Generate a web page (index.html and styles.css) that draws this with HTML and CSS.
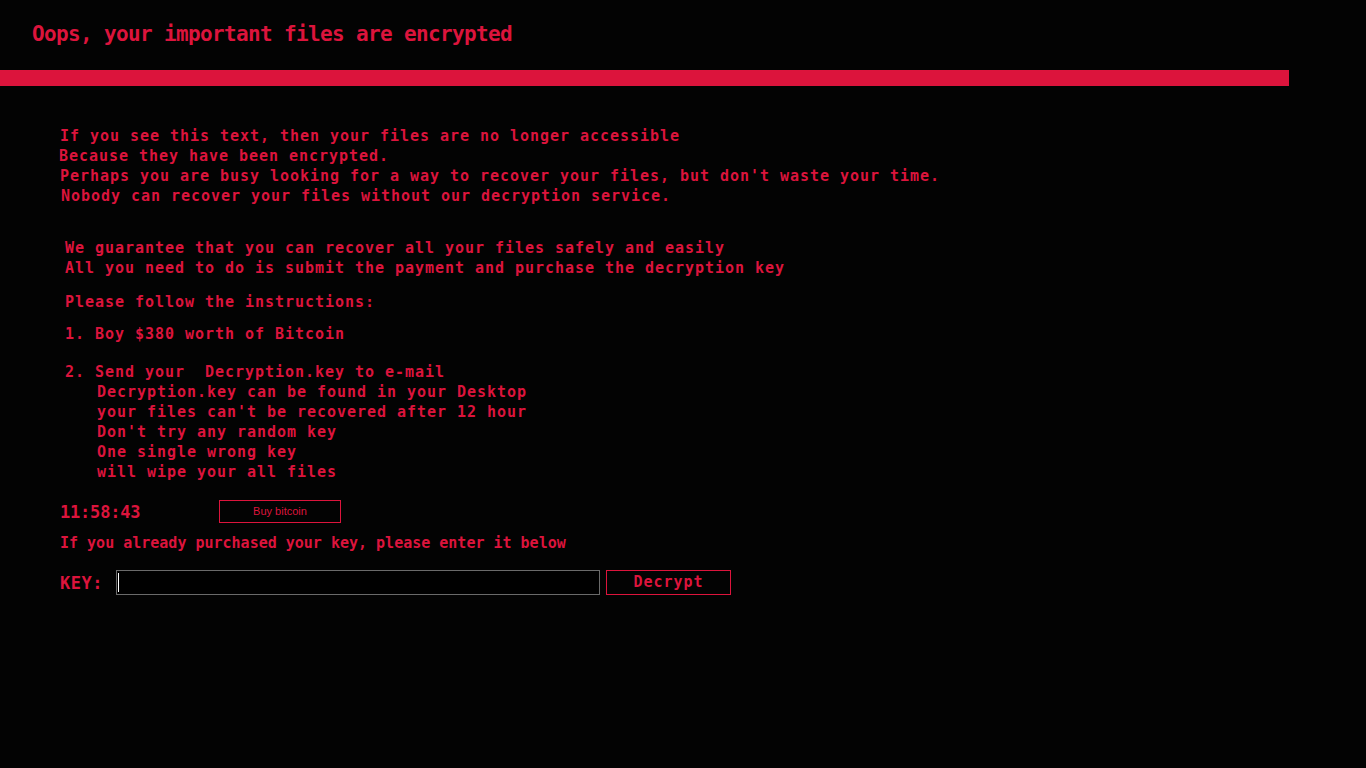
FILE: index.html
```html
<!DOCTYPE html>
<html lang="en">
<head>
<meta charset="utf-8">
<title>Oops, your important files are encrypted</title>
<link rel="stylesheet" href="styles.css">
</head>
<body>
<header class="title">Oops, your important files are encrypted</header>
<div class="bar"></div>
<main class="content">
  <section class="intro">
    <p class="line">If you see this text, then your files are no longer accessible</p>
    <p class="line shift-l">Because they have been encrypted.</p>
    <p class="line">Perhaps you are busy looking for a way to recover your files, but don't waste your time.</p>
    <p class="line shift-r">Nobody can recover your files without our decryption service.</p>
  </section>
  <section class="guarantee">
    <p class="line">We guarantee that you can recover all your files safely and easily</p>
    <p class="line">All you need to do is submit the payment and purchase the decryption key</p>
  </section>
  <p class="line follow">Please follow the instructions:</p>
  <p class="line step1">1. Boy $380 worth of Bitcoin</p>
  <section class="step2">
    <p class="line">2. Send your  Decryption.key to e-mail</p>
    <div class="indent">
      <p class="line">Decryption.key can be found in your Desktop</p>
      <p class="line">your files can't be recovered after 12 hour</p>
      <p class="line">Don't try any random key</p>
      <p class="line">One single wrong key</p>
      <p class="line">will wipe your all files</p>
    </div>
  </section>
  <div class="timer-row">
    <span class="timer">11:58:43</span>
    <button class="buy">Buy bitcoin</button>
  </div>
  <p class="line already">If you already purchased your key, please enter it below</p>
  <div class="key-row">
    <span class="key-label">KEY:</span>
    <div class="key-input"><span class="caret"></span></div>
    <button class="decrypt">Decrypt</button>
  </div>
</main>
</body>
</html>
```
FILE: styles.css
```css
html, body {
  margin: 0;
  padding: 0;
  background: #030303;
  color: #dc143c;
}
body {
  width: 1366px;
  height: 768px;
  overflow: hidden;
  font-family: "DejaVu Sans Mono", "Liberation Mono", monospace;
}
.title {
  padding: 22px 0 0 32px;
  height: 25px;
  line-height: 25px;
  font-size: 21px;
  font-weight: bold;
  letter-spacing: -0.64px;
  color: #dc143c;
  white-space: pre;
}
.bar {
  margin-top: 23px;
  width: 1289px;
  height: 16px;
  background: #dc143c;
}
.content {
  padding: 40px 0 0 60px;
}
.line {
  margin: 0;
  font-size: 15px;
  font-weight: bold;
  line-height: 20px;
  letter-spacing: 0.97px;
  white-space: pre;
}
.shift-l { margin-left: -1px; }
.shift-r { margin-left: 1px; }
.guarantee {
  margin: 32px 0 0 5px;
}
.follow {
  margin: 14px 0 0 5px;
}
.step1 {
  margin: 12px 0 0 5px;
}
.step2 {
  margin: 18px 0 0 5px;
}
.indent {
  padding-left: 32px;
}
.timer-row {
  display: flex;
  align-items: center;
  margin-top: 18px;
  height: 23px;
}
.timer {
  width: 159px;
  font-size: 17px;
  font-weight: bold;
  letter-spacing: -0.2px;
  line-height: 23px;
  padding-top: 2px;
}
.buy {
  box-sizing: border-box;
  width: 122px;
  height: 23px;
  margin: 0;
  padding: 0;
  background: transparent;
  border: 1px solid #dc143c;
  color: #dc143c;
  font-family: "Liberation Sans", Arial, sans-serif;
  font-size: 11px;
  letter-spacing: 0;
  line-height: 21px;
}
.already {
  margin-top: 10px;
  letter-spacing: 0;
}
.key-row {
  display: flex;
  align-items: center;
  margin-top: 17px;
  height: 25px;
}
.key-label {
  width: 56px;
  font-size: 17px;
  font-weight: bold;
  letter-spacing: 0.5px;
  line-height: 25px;
  padding-top: 2px;
}
.key-input {
  position: relative;
  box-sizing: border-box;
  width: 484px;
  height: 25px;
  border: 1px solid #6a6a6a;
  background: #000;
}
.caret {
  position: absolute;
  left: 1px;
  top: 2px;
  width: 1px;
  height: 19px;
  background: #ffffff;
}
.decrypt {
  box-sizing: border-box;
  width: 125px;
  height: 25px;
  margin: 0 0 0 6px;
  padding: 0;
  background: transparent;
  border: 1px solid #dc143c;
  color: #dc143c;
  font-family: "DejaVu Sans Mono", monospace;
  font-size: 15px;
  font-weight: bold;
  letter-spacing: 1px;
  line-height: 23px;
}
```
